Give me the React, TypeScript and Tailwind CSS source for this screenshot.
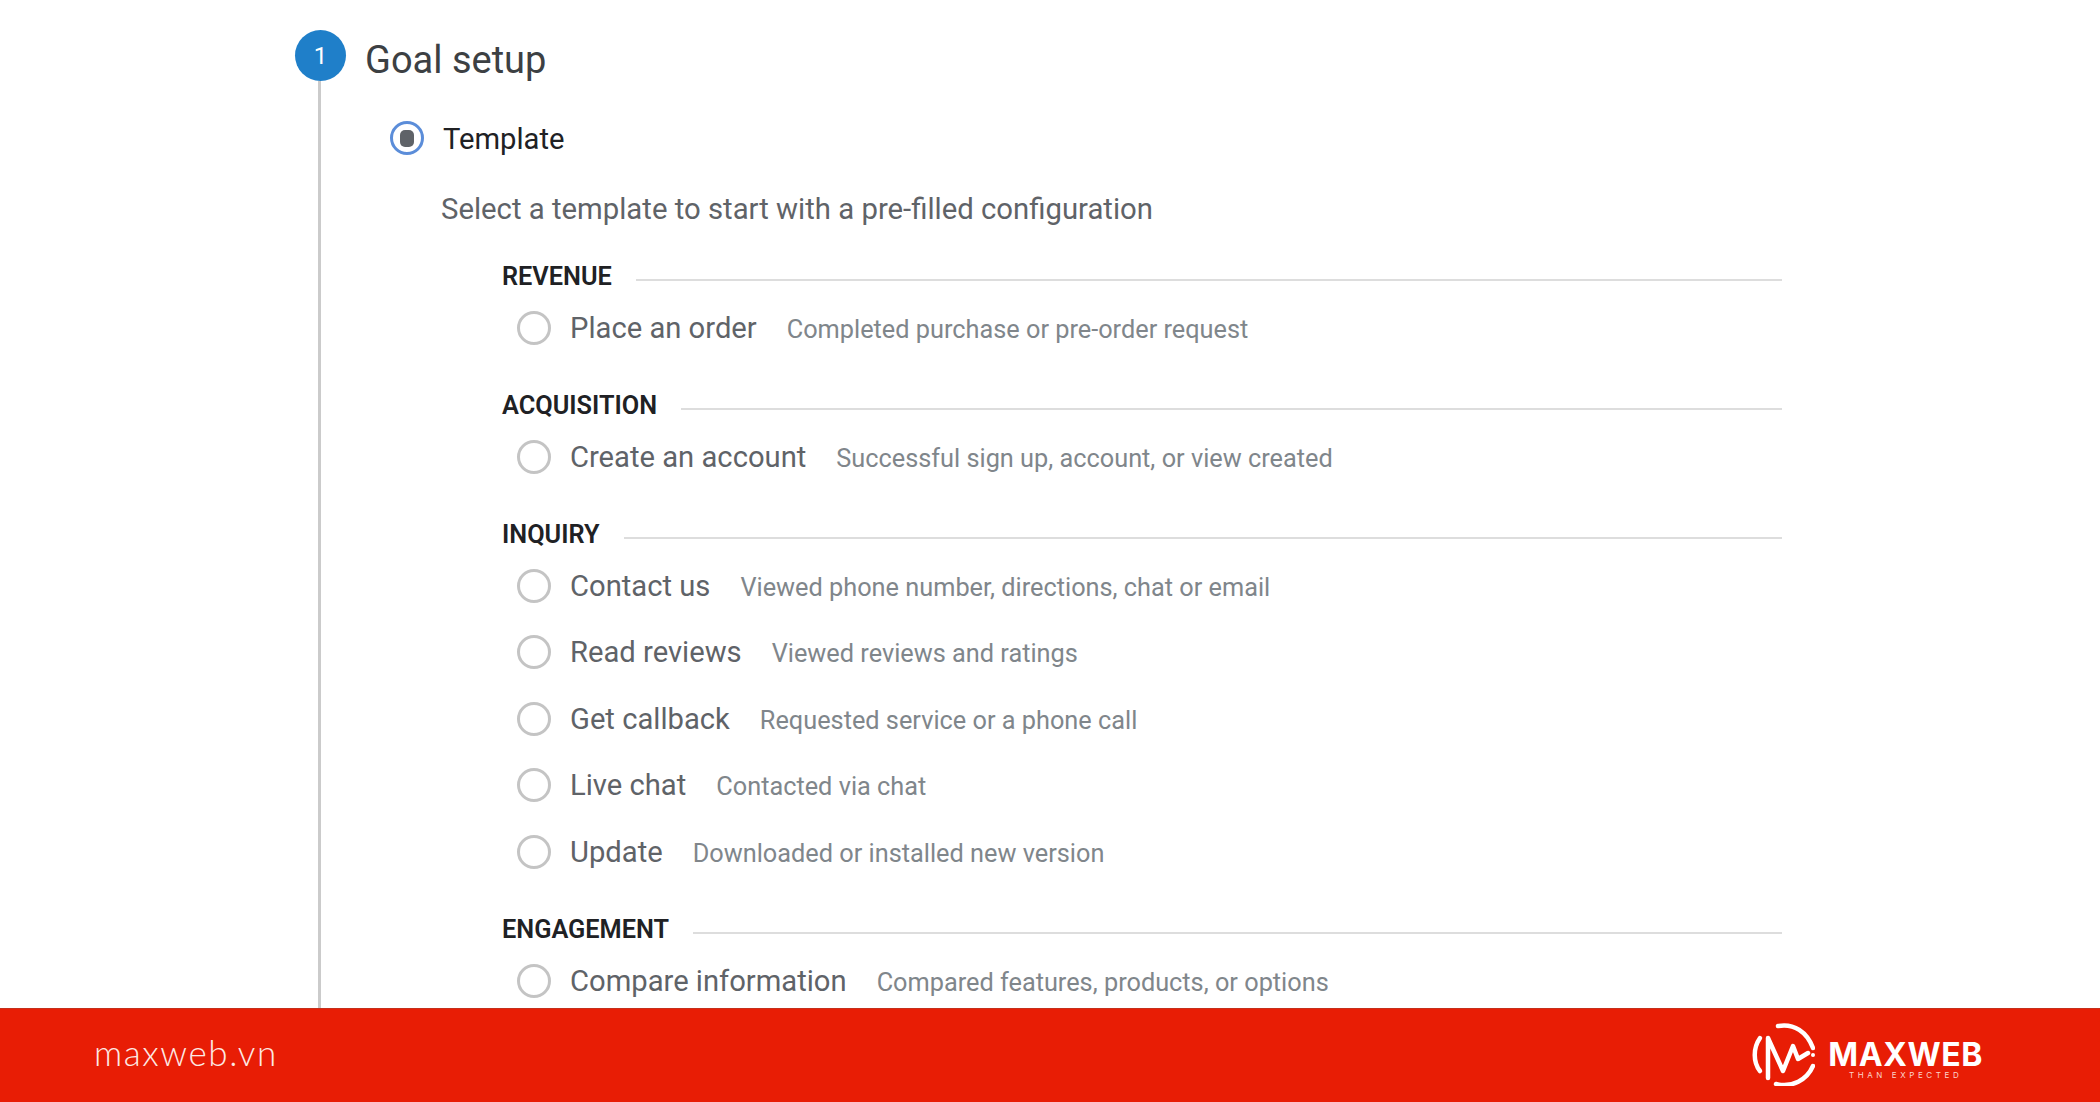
const sections = [
  {
    title: "REVENUE",
    rows: [{ label: "Place an order", desc: "Completed purchase or pre-order request", gap: "mt-[7px]" }],
  },
  {
    title: "ACQUISITION",
    rows: [{ label: "Create an account", desc: "Successful sign up, account, or view created", gap: "mt-[7px]" }],
  },
  {
    title: "INQUIRY",
    rows: [
      { label: "Contact us", desc: "Viewed phone number, directions, chat or email", gap: "mt-[7px]" },
      { label: "Read reviews", desc: "Viewed reviews and ratings", gap: "mt-[18px]" },
      { label: "Get callback", desc: "Requested service or a phone call", gap: "mt-[19px]" },
      { label: "Live chat", desc: "Contacted via chat", gap: "mt-[18px]" },
      { label: "Update", desc: "Downloaded or installed new version", gap: "mt-[19px]" },
    ],
  },
  {
    title: "ENGAGEMENT",
    rows: [{ label: "Compare information", desc: "Compared features, products, or options", gap: "mt-[7px]" }],
  },
];

function Logo() {
  return (
    <svg width="64" height="64" viewBox="0 0 64 64" fill="none" stroke="#fff" strokeWidth="4.5" strokeLinecap="round" strokeLinejoin="round">
      <path d="M9 16 C2 26 2 40 9 49" />
      <path d="M27 4 C43 1 56 10 62 26" />
      <path d="M25 62 C41 66 56 58 62 44" />
      <path d="M17 56 L17 16 L32 49 L42 24 L47 37 L57 31" />
      <circle cx="62" cy="33" r="2" fill="#fff" stroke="none" />
    </svg>
  );
}

export default function App() {
  return (
    <div className="w-[2100px] h-[1102px] flex flex-col overflow-hidden bg-white font-['Roboto',sans-serif]">
      <div className="h-[1008px] flex pl-[295px] pt-[30px] overflow-hidden">
        <div className="w-[51px] flex flex-col items-center shrink-0">
          <div className="w-[51px] h-[51px] rounded-full bg-[#1f7fc9] flex items-center justify-center text-white text-[24px] shrink-0">
            1
          </div>
          <div className="w-[3px] flex-1 bg-[#cbcbcb] -ml-[3px]" />
        </div>
        <div className="ml-[19px] flex flex-col">
          <div className="h-[60px] flex items-center text-[38px] text-[#3c4043] leading-none">Goal setup</div>
          <div className="mt-[31px] ml-[25px] h-[34px] flex items-center">
            <div className="w-[34px] h-[34px] rounded-full border-[3px] border-[#5b8dd9] flex items-center justify-center shrink-0">
              <div className="w-[14px] h-[17px] rounded-[5px] bg-[#5f6368]" />
            </div>
            <span className="ml-[19px] mt-[3px] text-[29.2px] text-[#202124]">Template</span>
          </div>
          <div className="mt-[35px] ml-[76px] h-[40px] flex items-center text-[29.3px] text-[#5f6368] whitespace-nowrap">
            Select a template to start with a pre-filled configuration
          </div>
          <div className="ml-[137px] w-[1280px] mt-[26px]">
            {sections.map((s, i) => (
              <div key={s.title} className={i > 0 ? "mt-[33px]" : ""}>
                <div className="h-[41px] flex items-center">
                  <span className="text-[25.3px] font-semibold text-[#202124] whitespace-nowrap">{s.title}</span>
                  <div className="ml-[24px] mt-[6px] flex-1 h-[2px] bg-[#dddddd]" />
                </div>
                {s.rows.map((r) => (
                  <div key={r.label} className={`h-[48px] flex items-center pl-[15px] ${r.gap}`}>
                    <div className="w-[34px] h-[34px] rounded-full border-[3px] border-[#c4c4c4] shrink-0" />
                    <span className="ml-[19px] mt-[1px] text-[29.2px] text-[#5f6368] whitespace-nowrap">{r.label}</span>
                    <span className="ml-[30px] mt-[3px] text-[25.3px] text-[#80868b] whitespace-nowrap">{r.desc}</span>
                  </div>
                ))}
              </div>
            ))}
          </div>
        </div>
      </div>
      <div className="h-[94px] bg-[#e81d05] border-t border-[#c4301c] flex items-center justify-between pl-[94px] pr-[117px]">
        <span className="text-[35px] -mt-[6px] font-light tracking-[1.6px] text-[#fde9e4] font-['Lato',sans-serif]">maxweb.vn</span>
        <div className="flex items-center gap-[13px] -mt-[3px]">
          <Logo />
          <div className="flex flex-col items-center mt-[13px]">
            <span className="text-[32px] font-bold leading-[26px] tracking-[0.6px] text-white font-['Inter',sans-serif]">MAXWEB</span>
            <span className="mt-[2px] text-[8px] leading-[10px] tracking-[3.6px] text-[#fbd5cc] font-['Inter',sans-serif]">THAN EXPECTED</span>
          </div>
        </div>
      </div>
    </div>
  );
}
